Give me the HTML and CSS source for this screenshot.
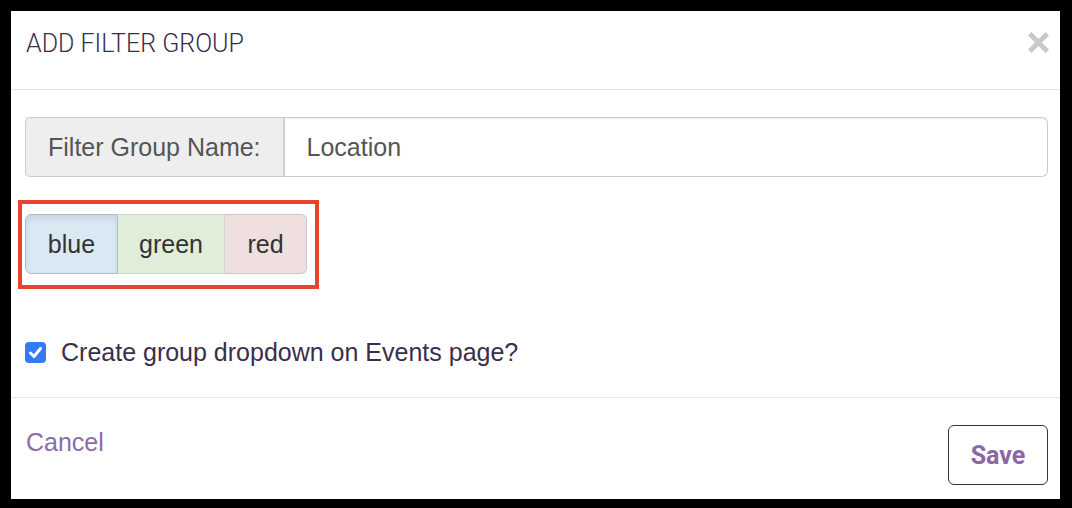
FILE: index.html
```html
<!DOCTYPE html>
<html lang="en">
<head>
    <meta charset="UTF-8">
    <title>Add Filter Group</title>
    <link rel="stylesheet" href="styles.css">
</head>
<body>
    <div class="modal">
        <div class="modal-header">
            <h4 class="modal-title">ADD FILTER GROUP</h4>
            <span class="close" aria-label="Close">
                <svg width="21" height="21" viewBox="0 0 21 21">
                    <path d="M3.5 3.5 L17.5 17.5 M17.5 3.5 L3.5 17.5" stroke="#c9c9c9" stroke-width="5" stroke-linecap="square"/>
                </svg>
            </span>
        </div>
        <div class="modal-body">
            <div class="input-group">
                <span class="input-group-addon">Filter Group Name:</span>
                <input type="text" class="form-control" value="Location">
            </div>
            <div class="highlight">
                <div class="btn-group">
                    <button class="btn btn-blue">blue</button>
                    <button class="btn btn-green">green</button>
                    <button class="btn btn-red">red</button>
                </div>
            </div>
            <label class="check">
                <span class="check-box">
                    <svg width="21" height="21" viewBox="0 0 21 21">
                        <rect x="0" y="0" width="21" height="21" rx="4" fill="#3479f6"/>
                        <path d="M5.5 11 L9 14.5 L15.5 6.5" fill="none" stroke="#fff" stroke-width="3" stroke-linecap="round" stroke-linejoin="round"/>
                    </svg>
                </span>
                Create group dropdown on Events page?
            </label>
        </div>
        <div class="modal-footer">
            <a class="cancel" href="#">Cancel</a>
            <button class="btn-save">Save</button>
        </div>
    </div>
</body>
</html>
```

FILE: styles.css
```css
html, body {
    height: 100%;
}

body {
    margin: 0;
    background-color: #000;
    padding: 11px 12px 9px 11px;
    box-sizing: border-box;
    font-family: 'Liberation Sans', Arial, sans-serif;
}

.modal {
    background-color: #fff;
    height: 100%;
    display: flex;
    flex-direction: column;
}

.modal-header {
    height: 79px;
    box-sizing: border-box;
    display: flex;
    align-items: flex-start;
    justify-content: space-between;
    padding: 18px 11px 0 15px;
    border-bottom: 1px solid #e5e5e5;
}

.modal-title {
    margin: 0;
    font-family: Roboto, sans-serif;
    font-weight: 300;
    font-size: 25px;
    line-height: 30px;
    color: #3a2d4b;
}

.close {
    display: flex;
    margin-top: 3px;
}

.modal-body {
    padding: 27px 12px 0 14px;
    height: 308px;
    box-sizing: border-box;
    border-bottom: 1px solid #e5e5e5;
}

.input-group {
    display: flex;
    height: 60px;
}

.input-group-addon {
    display: flex;
    align-items: center;
    padding: 0 22px;
    background-color: #eee;
    border: 1px solid #ccc;
    border-right: 2px solid #d0d0d0;
    border-radius: 5px 0 0 5px;
    font-size: 25px;
    color: #555;
}

.form-control {
    flex: 1;
    border: 1px solid #ccc;
    border-left: none;
    border-radius: 0 6px 6px 0;
    padding: 0 22px;
    font-family: 'Liberation Sans', Arial, sans-serif;
    font-size: 25px;
    color: #555;
    outline: none;
    box-shadow: inset 0 1px 1px rgba(0, 0, 0, 0.075);
}

.highlight {
    display: inline-block;
    margin: 23px 0 0 -7px;
    padding: 10px 8px 11px 3px;
    border: 4px solid #e8432b;
}

.btn-group {
    display: flex;
}

.btn {
    height: 60px;
    font-family: 'Liberation Sans', Arial, sans-serif;
    font-size: 25px;
    color: #333;
    border: 1px solid #c8c8c8;
    padding: 0;
    margin: 0;
}

.btn-blue {
    background-color: #dae8f4;
    border-radius: 6px 0 0 6px;
    border-color: #b3bcc6;
    box-shadow: inset 0 4px 6px rgba(0, 0, 0, 0.08);
    width: 93px;
}

.btn-green {
    background-color: #e0eed9;
    border-left: none;
    border-color: #cfd8cb;
    width: 107px;
}

.btn-red {
    background-color: #f0dfdf;
    border-left: none;
    border-radius: 0 6px 6px 0;
    width: 82px;
}

.check {
    display: flex;
    align-items: center;
    margin-top: 49px;
    font-size: 25px;
    color: #3b2e4c;
}

.check-box {
    display: flex;
    margin-right: 15px;
}

.modal-footer {
    flex: 1;
    display: flex;
    justify-content: space-between;
    align-items: flex-start;
    padding: 27px 12px 0 15px;
}

.cancel {
    color: #8c6da8;
    font-size: 25px;
    text-decoration: none;
    margin-top: 3px;
}

.btn-save {
    width: 100px;
    height: 60px;
    background-color: #fff;
    border: 1px solid #3d2f4a;
    border-radius: 6px;
    font-family: Roboto, sans-serif;
    font-weight: 700;
    font-size: 25px;
    color: #8a67a6;
}
```
